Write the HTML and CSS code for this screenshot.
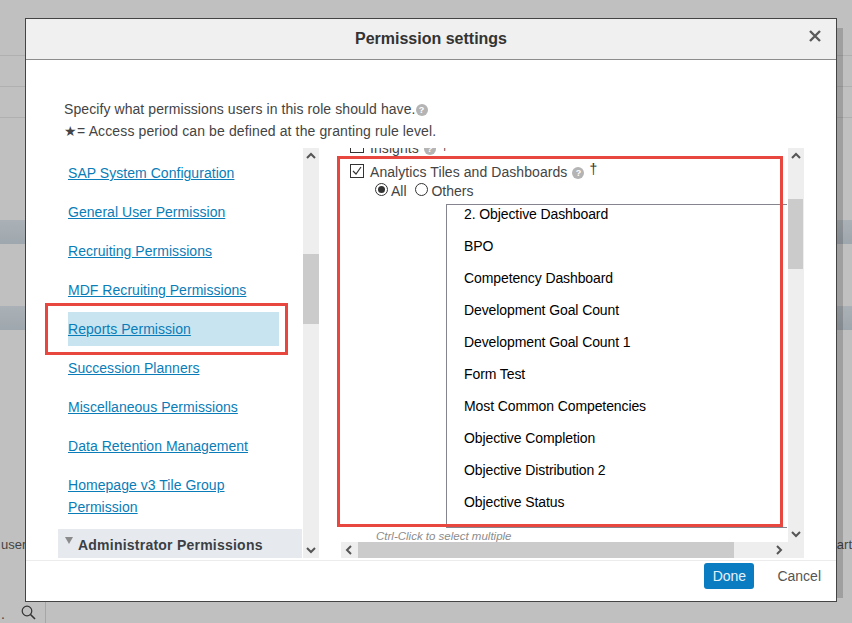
FILE: index.html

```html
<!DOCTYPE html>
<html>
  <head>
    <meta name="viewport" content="width=device-width,initial-scale=1">
    <title>Permission settings</title>
    <link rel="stylesheet" href="styles.css">
  </head>
  <body>
    <div class="backdrop">
        <div class="bg-line first"></div>
        <div class="bg-line"></div>
        <div class="bg-line"></div>
        <div class="bg-band first"></div>
        <div class="bg-band"></div>
        <div class="bg-text"><span>user</span><span>art</span></div>
        <div class="bg-tile">
            <span class="bg-dot">.</span>
            <svg width="15" height="15" viewBox="0 0 15 15"><circle cx="6" cy="6" r="4.8" fill="none" stroke="#333" stroke-width="1.2"/><path d="M9.5 9.5l4.5 4.5" stroke="#333" stroke-width="1.6"/></svg>
        </div>
    </div>

    <div class="modal-shadow"></div>
    <div class="modal">
        <div class="modal-header">
            <h1>Permission settings</h1>
            <svg class="close" width="12" height="12" viewBox="0 0 12 12"><path d="M1 1l10 10M11 1L1 11" stroke="#5a5a5a" stroke-width="2.4"/></svg>
        </div>

        <div class="modal-body">
            <div class="notes">
                <p>Specify what permissions users in this role should have.<span class="help"><span>?</span></span></p>
                <p class="star-note">★= Access period can be defined at the granting rule level.</p>
            </div>

            <div class="panels">
                <div class="left-panel">
                    <div class="left-content">
                        <ul class="links">
                            <li><a href="#">SAP System Configuration</a></li>
                            <li><a href="#">General User Permission</a></li>
                            <li><a href="#">Recruiting Permissions</a></li>
                            <li><a href="#">MDF Recruiting Permissions</a></li>
                            <li class="selected"><a href="#">Reports Permission</a></li>
                            <li><a href="#">Succession Planners</a></li>
                            <li><a href="#">Miscellaneous Permissions</a></li>
                            <li><a href="#">Data Retention Management</a></li>
                            <li><a href="#">Homepage v3 Tile Group Permission</a></li>
                        </ul>
                        <div class="group-head"><span class="tri"></span>Administrator Permissions</div>
                    </div>
                    <div class="vbar left-bar">
                        <svg class="arrow" width="16" height="16" viewBox="0 0 16 16"><path d="M4 10l4-4 4 4" fill="none" stroke="#555" stroke-width="2"/></svg>
                        <div class="thumb"></div>
                        <svg class="arrow end" width="16" height="16" viewBox="0 0 16 16"><path d="M4 6l4 4 4-4" fill="none" stroke="#555" stroke-width="2"/></svg>
                    </div>
                </div>

                <div class="right-panel">
                    <div class="right-main">
                        <div class="right-content">
                            <div class="perm insights"><span class="box"></span>Insights<span class="help"><span>?</span></span><sup>†</sup></div>
                            <div class="perm">
                                <span class="box"><svg width="12" height="12" viewBox="0 0 12 12"><path d="M2 6l3 3 5-7" fill="none" stroke="#333" stroke-width="1.2"/></svg></span>Analytics Tiles and Dashboards<span class="help"><span>?</span></span><sup>†</sup>
                            </div>
                            <div class="radios">
                                <span class="radio on"></span>All
                                <span class="radio second"></span>Others
                            </div>
                            <ul class="listbox">
                                <li>2. Objective Dashboard</li>
                                <li>BPO</li>
                                <li>Competency Dashboard</li>
                                <li>Development Goal Count</li>
                                <li>Development Goal Count 1</li>
                                <li>Form Test</li>
                                <li>Most Common Competencies</li>
                                <li>Objective Completion</li>
                                <li>Objective Distribution 2</li>
                                <li>Objective Status</li>
                            </ul>
                            <div class="hint">Ctrl-Click to select multiple</div>
                        </div>
                        <div class="hbar">
                            <svg width="17" height="16" viewBox="0 0 17 16"><path d="M10 4L6 8l4 4" fill="none" stroke="#555" stroke-width="2"/></svg>
                            <div class="hthumb"></div>
                            <svg class="end" width="16" height="16" viewBox="0 0 16 16"><path d="M6 4l4 4-4 4" fill="none" stroke="#555" stroke-width="2"/></svg>
                        </div>
                    </div>
                    <div class="vbar right-bar">
                        <svg class="arrow" width="16" height="16" viewBox="0 0 16 16"><path d="M4 10l4-4 4 4" fill="none" stroke="#555" stroke-width="2"/></svg>
                        <div class="thumb"></div>
                        <svg class="arrow down" width="16" height="16" viewBox="0 0 16 16"><path d="M4 6l4 4 4-4" fill="none" stroke="#555" stroke-width="2"/></svg>
                    </div>
                </div>
            </div>
        </div>

        <div class="modal-footer">
            <button class="btn-done">Done</button>
            <button class="btn-cancel">Cancel</button>
        </div>

        <!-- red annotation boxes -->
        <div class="mark mark-left"></div>
        <div class="mark mark-right"></div>
    </div>
  </body>
</html>
```

FILE: styles.css

```css
:root {
    --backdrop: #c0c0c0;
    --line: #b0b0b0;
    --text: #444;
    --link: #0a7db8;
    --bar: #eeeeee;
    --thumb: #cbcbcb;
    --red: #e8473f;
}

html, body {
    margin: 0;
    padding: 0;
    height: 100%;
    overflow: hidden;
}

body {
    position: relative;
    background-color: var(--backdrop);
    color: var(--text);
    font-family: "Liberation Sans", Arial, sans-serif;
    font-size: 14px;
}

/* Page behind the dialog */
.backdrop {
    height: 623px;
    display: flex;
    flex-direction: column;
}

.bg-line {
    height: 1px;
    margin-bottom: 30px;
    background-color: var(--line);
}

.bg-line.first {
    margin-top: 55px;
}

.bg-band {
    height: 24px;
    background: linear-gradient(#abb1b6, #9fa7ae);
}

.bg-band.first {
    margin-top: 72px;
    margin-bottom: 62px;
}

.bg-text {
    margin-top: 206px;
    display: flex;
    justify-content: space-between;
    height: 18px;
    line-height: 18px;
    padding: 0 0 0 1px;
    font-size: 13px;
    color: #444;
}

.bg-tile {
    margin-top: 48px;
    width: 45px;
    height: 21px;
    border-right: 1px solid #a6a6a6;
    display: flex;
    align-items: center;
    position: relative;
}

.bg-tile svg {
    margin-left: 16px;
}

.bg-dot {
    margin-left: 1px;
    margin-top: 2px;
}

/* Dialog */
.modal-shadow {
    position: absolute;
    left: 837px;
    top: 28px;
    width: 6px;
    height: 570px;
    background-color: rgba(0, 0, 0, 0.17);
}

.modal {
    position: absolute;
    left: 25px;
    top: 18px;
    width: 812px;
    height: 584px;
    box-sizing: border-box;
    border: 1px solid #444;
    background-color: #fff;
    display: flex;
    flex-direction: column;
}

.modal-header {
    height: 41px;
    box-sizing: border-box;
    flex: none;
    background-color: #f0f0f0;
    border-bottom: 1px solid #8c8c8c;
    display: flex;
    align-items: center;
    justify-content: center;
    position: relative;
}

.modal-header h1 {
    margin: 0;
    font-size: 16px;
    font-weight: bold;
    color: #333;
}

.close {
    position: absolute;
    right: 15px;
    top: 11px;
}

.modal-body {
    height: 500px;
    flex: none;
    box-sizing: border-box;
    padding: 38px 0 0 32px;
}

.notes {
    margin-left: 6px;
    height: 50px;
}

.notes p {
    margin: 0;
    line-height: 22px;
    letter-spacing: 0.08px;
}

.notes .star-note {
    letter-spacing: 0.12px;
}

.help {
    display: inline-flex;
    align-items: center;
    justify-content: center;
    width: 12px;
    height: 12px;
    border-radius: 50%;
    background-color: #b4b4b4;
    vertical-align: 1px;
}

.help span {
    color: #fff;
    font-size: 9px;
    font-weight: bold;
    line-height: 12px;
}

.panels {
    display: flex;
    height: 410px;
}

/* Left navigation */
.left-panel {
    display: flex;
    width: 261px;
    height: 100%;
    flex: none;
}

.left-content {
    width: 245px;
    flex: none;
    display: flex;
    flex-direction: column;
}

.links {
    list-style: none;
    margin: 0;
    padding: 8px 24px 0 10px;
    flex: 1;
}

.links li {
    padding: 6px 0;
    margin-bottom: 5px;
    line-height: 22px;
    letter-spacing: 0.04px;
}

.links li.selected {
    background-color: #c8e4f1;
}

.links a {
    color: var(--link);
    text-decoration: underline;
}

.group-head {
    height: 29px;
    flex: none;
    margin-right: 1px;
    background-color: #e6eaee;
    font-weight: bold;
    color: #3a3f45;
    line-height: 33px;
    letter-spacing: 0.23px;
    padding-left: 20px;
    position: relative;
}

.tri {
    position: absolute;
    left: 7px;
    top: 8px;
    border-left: 4.5px solid transparent;
    border-right: 4.5px solid transparent;
    border-top: 7px solid #8b8b8b;
}

.vbar {
    width: 16px;
    flex: none;
    background-color: var(--bar);
    display: flex;
    flex-direction: column;
}

.arrow {
    flex: none;
}

.arrow.end {
    margin-top: auto;
}

.thumb {
    background-color: var(--thumb);
    height: 70px;
    flex: none;
}

.left-bar .thumb {
    margin-top: 90px;
}

.right-bar .thumb {
    margin-top: 35px;
    width: 15px;
}

.right-bar .arrow.down {
    margin-top: 257px;
}

/* Right permissions */
.right-panel {
    display: flex;
    margin-left: 22px;
    width: 463px;
    height: 100%;
    flex: none;
}

.right-main {
    width: 447px;
    flex: none;
    display: flex;
    flex-direction: column;
}

.right-content {
    height: 394px;
    flex: none;
    overflow: hidden;
}

.perm {
    height: 24px;
    line-height: 22px;
    padding-left: 9px;
    white-space: nowrap;
    letter-spacing: 0.07px;
    position: relative;
}

.insights {
    margin-top: -11px;
}

.perm .help {
    margin-left: 5px;
}

.perm sup {
    margin-left: 5px;
    font-size: 14px;
    line-height: 0;
    vertical-align: 3px;
    color: #333;
}

.box {
    display: inline-flex;
    width: 12px;
    height: 12px;
    border: 1px solid #333;
    margin-right: 6px;
    vertical-align: 0;
    align-items: center;
    justify-content: center;
}

.radios {
    height: 19px;
    line-height: 19px;
    padding-left: 34px;
    margin-top: -3px;
}

.radio {
    display: inline-block;
    box-sizing: border-box;
    width: 13px;
    height: 13px;
    border-radius: 50%;
    border: 1px solid #333;
    vertical-align: 0;
    margin-right: 3px;
    position: relative;
}

.radio.second {
    margin-left: 5px;
}

.radio.on::after {
    content: "";
    position: absolute;
    left: 2px;
    top: 2px;
    width: 7px;
    height: 7px;
    border-radius: 50%;
    background-color: #333;
}

.listbox {
    list-style: none;
    margin: 3px 1px 0 105px;
    padding: 0;
    height: 324px;
    box-sizing: border-box;
    border-left: 1px solid #85858f;
    border-top: 1px solid #85858f;
    border-bottom: 1px solid #85858f;
    overflow: hidden;
}

.listbox li {
    height: 32px;
    line-height: 32px;
    padding-left: 17px;
    color: #000;
    letter-spacing: -0.1px;
}

.listbox li:first-child {
    margin-top: -7px;
}

.hint {
    margin-top: 1px;
    padding-left: 35px;
    font-size: 11.5px;
    line-height: 14px;
    font-style: italic;
    color: #8c8c8c;
}

.hbar {
    height: 16px;
    flex: none;
    background-color: var(--bar);
    display: flex;
    align-items: center;
}

.hthumb {
    width: 376px;
    height: 16px;
    background-color: var(--thumb);
}

.hbar .end {
    margin-left: auto;
    margin-right: 1px;
}

/* Footer */
.modal-footer {
    flex: 1;
    border-top: 1px solid #ececec;
    display: flex;
    justify-content: flex-end;
    align-items: flex-start;
    padding: 2px 0 0 0;
}

.btn-done {
    width: 50px;
    height: 26px;
    border: 0;
    border-radius: 3px;
    background-color: #0a7cc1;
    color: #e6f2fa;
    font-family: inherit;
    font-size: 14px;
    padding: 0;
}

.btn-cancel {
    height: 26px;
    border: 0;
    background: none;
    color: #555;
    font-family: inherit;
    font-size: 14px;
    padding: 0;
    margin: 0 15px 0 23px;
}

/* Annotations */
.mark {
    position: absolute;
    box-sizing: border-box;
    border: 3px solid var(--red);
}

.mark-left {
    left: 19px;
    top: 284px;
    width: 243px;
    height: 52px;
}

.mark-right {
    left: 311px;
    top: 137px;
    width: 446px;
    height: 371px;
}
```
